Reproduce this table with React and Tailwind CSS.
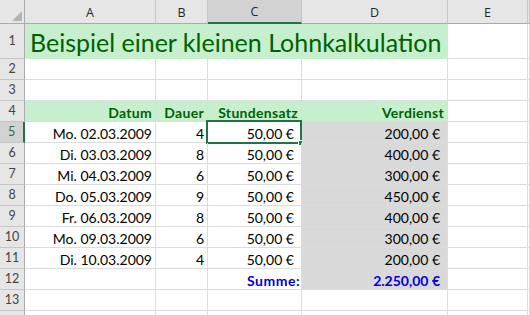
import React from 'react';

const cols = ['A', 'B', 'C', 'D', 'E', ''];

const rows = [
  ['Mo. 02.03.2009', '4', '50,00 €', '200,00 €'],
  ['Di. 03.03.2009', '8', '50,00 €', '400,00 €'],
  ['Mi. 04.03.2009', '6', '50,00 €', '300,00 €'],
  ['Do. 05.03.2009', '9', '50,00 €', '450,00 €'],
  ['Fr. 06.03.2009', '8', '50,00 €', '400,00 €'],
  ['Mo. 09.03.2009', '6', '50,00 €', '300,00 €'],
  ['Di. 10.03.2009', '4', '50,00 €', '200,00 €'],
];

function RowHead({ n, active }) {
  return (
    <div
      className={
        active
          ? 'flex items-center justify-center bg-[#d2d2d2] border-r-2 border-r-[#217346] border-b border-b-[#c6c6c6] text-[#217346] text-[12.5px]'
          : 'flex items-center justify-center bg-[#e6e6e6] border-r border-r-[#ababab] border-b border-b-[#c6c6c6] text-[#444] text-[12.5px]'
      }
    >
      {n}
    </div>
  );
}

function Cell({ children, className = '' }) {
  return (
    <div className={'relative flex items-end justify-end pb-[1px] border-r border-b border-[#dadcdd] leading-[14px] whitespace-nowrap ' + className}>
      {children}
    </div>
  );
}

function EmptyRow({ n }) {
  return (
    <>
      <RowHead n={n} />
      <Cell />
      <Cell />
      <Cell />
      <Cell />
      <Cell />
      <Cell />
    </>
  );
}

export default function App() {
  return (
    <div className="w-[530px] h-[315px] overflow-hidden bg-white font-['Lato',sans-serif] text-[14px] text-black">
      <div className="grid grid-cols-[25px_131px_52px_94px_146px_80px_1fr] grid-rows-[24px_35px_repeat(13,21px)]">
        {/* header row */}
        <div className="relative bg-[#e6e6e6] border-r border-r-[#ababab] border-b border-b-[#ababab]">
          <svg className="absolute left-[12px] top-[11px]" width="10" height="10" viewBox="0 0 10 10">
            <polygon points="10,0 10,10 0,10" fill="#b4b4b4" />
          </svg>
        </div>
        {cols.map((c, i) => (
          <div
            key={i}
            className={
              c === 'C'
                ? "flex items-center justify-center pt-[3px] bg-[#d2d2d2] border-r border-r-[#c6c6c6] border-b-2 border-b-[#217346] font-['Open_Sans',sans-serif] text-[12.5px] text-[#262626]"
                : "flex items-center justify-center pt-[3px] bg-[#e6e6e6] border-r border-r-[#c6c6c6] border-b border-b-[#ababab] font-['Open_Sans',sans-serif] text-[12.5px] text-[#262626]"
            }
          >
            {c}
          </div>
        ))}

        {/* row 1 */}
        <RowHead n="1" />
        <div className="col-span-4 flex items-end pl-[5px] pb-[3px] bg-[#c6efce] border-b border-[#c6efce] text-[25px] leading-[25px] text-[#006100] whitespace-nowrap">
          Beispiel einer kleinen Lohnkalkulation
        </div>
        <Cell />
        <Cell />

        <EmptyRow n={2} />
        <EmptyRow n={3} />

        {/* row 4 */}
        <RowHead n="4" />
        {['Datum', 'Dauer', 'Stundensatz', 'Verdienst'].map((h) => (
          <Cell key={h} className="bg-[#c6efce] border-[#c6efce] pr-[3px] font-bold tracking-[0.3px] text-[#006100]">
            {h}
          </Cell>
        ))}
        <Cell />
        <Cell />

        {/* data rows */}
        {rows.map((r, i) => (
          <React.Fragment key={i}>
            <RowHead n={i + 5} active={i === 0} />
            <Cell className="pr-[3px]">{r[0]}</Cell>
            <Cell className="pr-[3px]">{r[1]}</Cell>
            <Cell className="pr-[7px]">
              {r[2]}
              {i === 0 && (
                <div className="absolute -left-[2px] -top-[2px] w-[96px] h-[24px] border-2 border-[#217346]">
                  <div className="absolute -right-[4px] -bottom-[4px] w-[6px] h-[6px] bg-[#217346] border border-white" />
                </div>
              )}
            </Cell>
            <Cell className="bg-[#d9d9d9] border-[#d9d9d9] pr-[7px]">{r[3]}</Cell>
            <Cell />
            <Cell />
          </React.Fragment>
        ))}

        {/* row 12 */}
        <RowHead n="12" />
        <Cell />
        <Cell />
        <Cell className="pr-[1px] font-bold tracking-[0.5px] text-[#0000e0]">Summe:</Cell>
        <Cell className="bg-[#d9d9d9] border-[#d9d9d9] pr-[7px] font-bold text-[#0000e0]">2.250,00 €</Cell>
        <Cell />
        <Cell />

        <EmptyRow n={13} />
        <EmptyRow n="" />
      </div>
    </div>
  );
}
